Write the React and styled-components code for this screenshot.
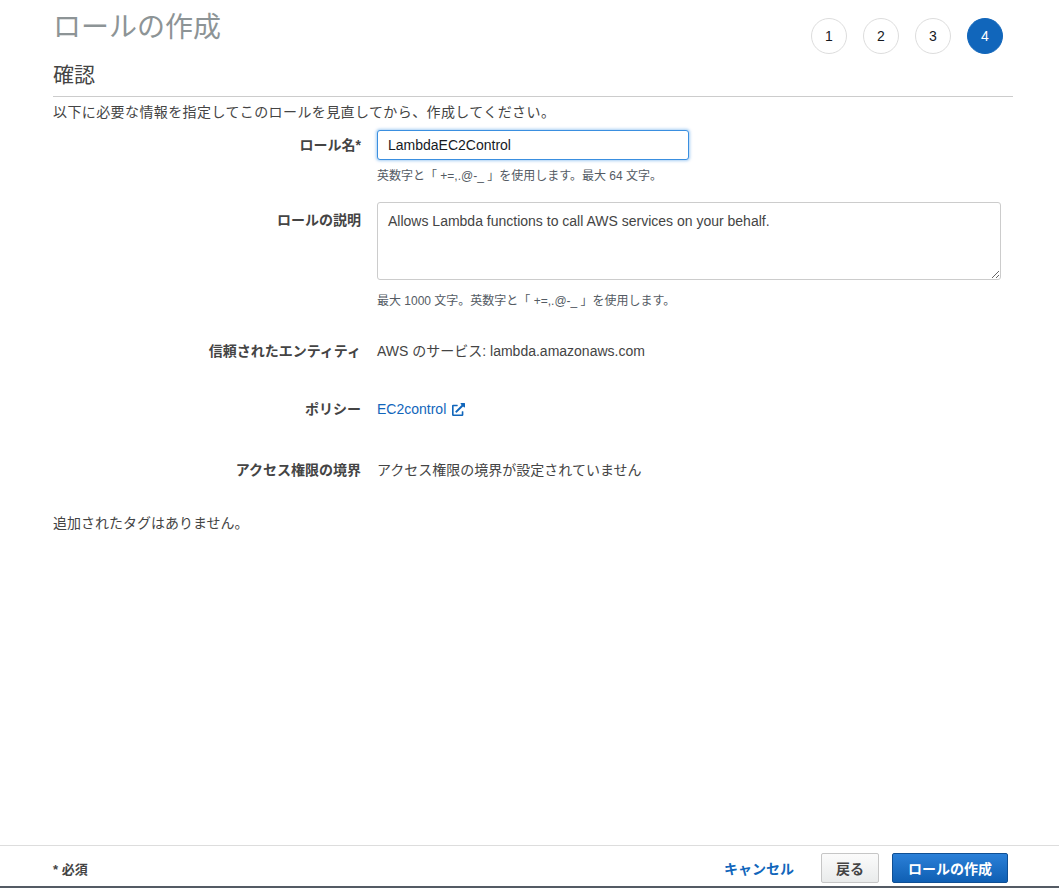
import React from 'react';
import styled, { createGlobalStyle } from 'styled-components';
import { FaExternalLinkAlt } from 'react-icons/fa';

const GlobalStyle = createGlobalStyle`
  html, body {
    margin: 0;
    padding: 0;
    background: #fff;
  }
  body {
    font-family: "Liberation Sans", Arial, "Noto Sans CJK JP", sans-serif;
    color: #444;
  }
  * {
    box-sizing: border-box;
  }
`;

const Page = styled.div`
  min-height: 100vh;
  display: flex;
  flex-direction: column;
`;

const Content = styled.main`
  flex: 1;
  padding: 0 46px 0 53px;
`;

const Header = styled.div`
  display: flex;
  justify-content: space-between;
  align-items: flex-start;
`;

const Title = styled.h1`
  margin: 0;
  padding-top: 13px;
  font-size: 28px;
  line-height: 30px;
  font-weight: normal;
  color: #8d9496;
`;

const Steps = styled.ol`
  display: flex;
  gap: 16px;
  list-style: none;
  margin: 18px 10px 0 0;
  padding: 0;
`;

const Step = styled.li`
  width: 36px;
  height: 36px;
  border-radius: 50%;
  display: flex;
  align-items: center;
  justify-content: center;
  font-size: 14px;
  border: 1px solid ${p => (p.$active ? '#1166bb' : '#ddd')};
  background: ${p => (p.$active ? '#1166bb' : '#fff')};
  color: ${p => (p.$active ? '#fff' : '#16191f')};
`;

const SectionTitle = styled.h2`
  margin: 9px 0 0;
  padding-bottom: 9px;
  font-size: 21px;
  line-height: 24px;
  font-weight: normal;
  color: #444;
  border-bottom: 1px solid #ccc;
`;

const Intro = styled.p`
  margin: 5px 0 0;
  font-size: 14px;
  line-height: 20px;
  letter-spacing: 0.4px;
`;

const FormRow = styled.div`
  display: grid;
  grid-template-columns: 308px 1fr;
  column-gap: 16px;
  margin-top: ${p => p.$gap}px;
  align-items: start;
`;

const Label = styled.div`
  text-align: right;
  font-weight: bold;
  font-size: 14px;
  line-height: 20px;
  color: #444;
  padding-top: ${p => p.$offset || 0}px;
`;

const Field = styled.div`
  display: flex;
  flex-direction: column;
`;

const TextInput = styled.input`
  width: 312px;
  height: 30px;
  padding: 0 10px;
  font: inherit;
  font-size: 14px;
  color: #16191f;
  border: 1px solid #3a8fe0;
  border-radius: 3px;
  box-shadow: 0 0 3px 1px rgba(0, 115, 220, 0.35);
  outline: none;
`;

const TextArea = styled.textarea`
  width: 624px;
  height: 78px;
  padding: 8px 10px;
  font: inherit;
  font-size: 14px;
  line-height: 20px;
  color: #444;
  border: 1px solid #ccc;
  border-radius: 3px;
  resize: vertical;
  outline: none;
`;

const Hint = styled.div`
  margin-top: ${p => p.$gap}px;
  font-size: 12px;
  line-height: 16px;
  color: #545b64;
`;

const Value = styled.div`
  font-size: 14px;
  line-height: 20px;
  color: #444;
`;

const Link = styled.a`
  display: inline-flex;
  align-items: center;
  gap: 6px;
  font-size: 14px;
  line-height: 20px;
  color: #1166bb;
  text-decoration: none;
  cursor: pointer;
`;

const Note = styled.p`
  margin: 33px 0 0;
  font-size: 14px;
  line-height: 20px;
`;

const Footer = styled.footer`
  display: flex;
  align-items: center;
  padding: 7px 51px 3px 53px;
  border-top: 1px solid #ddd;
  border-bottom: 2px solid #545b64;
`;

const Required = styled.span`
  font-size: 13px;
  font-weight: bold;
  color: #444;
`;

const Actions = styled.div`
  margin-left: auto;
  display: flex;
  align-items: center;
`;

const CancelLink = styled.a`
  font-size: 14px;
  font-weight: bold;
  color: #1166bb;
  margin-right: 27px;
  cursor: pointer;
`;

const Button = styled.button`
  height: 30px;
  padding: 0 ${p => (p.$primary ? '15px' : '14px')};
  font: inherit;
  font-size: 14px;
  font-weight: bold;
  border-radius: 2px;
  cursor: pointer;
  margin-left: ${p => (p.$primary ? '13px' : '0')};
  border: 1px solid ${p => (p.$primary ? '#0f4f94' : '#c6c6c6')};
  color: ${p => (p.$primary ? '#fff' : '#444')};
  background: ${p =>
    p.$primary
      ? 'linear-gradient(to bottom, #2b80d8, #0f5fb3)'
      : 'linear-gradient(to bottom, #fbfbfb, #e9ebeb)'};
`;

export default function App() {
  return (
    <Page>
      <GlobalStyle />
      <Content>
        <Header>
          <Title>ロールの作成</Title>
          <Steps>
            {[1, 2, 3, 4].map(n => (
              <Step key={n} $active={n === 4}>
                {n}
              </Step>
            ))}
          </Steps>
        </Header>

        <SectionTitle>確認</SectionTitle>
        <Intro>以下に必要な情報を指定してこのロールを見直してから、作成してください。</Intro>

        <FormRow $gap={8}>
          <Label $offset={5}>ロール名*</Label>
          <Field>
            <TextInput readOnly value="LambdaEC2Control" />
            <Hint $gap={8}>英数字と「 +=,.@-_ 」を使用します。最大 64 文字。</Hint>
          </Field>
        </FormRow>

        <FormRow $gap={18}>
          <Label $offset={8}>ロールの説明</Label>
          <Field>
            <TextArea
              readOnly
              value="Allows Lambda functions to call AWS services on your behalf."
            />
            <Hint $gap={13}>最大 1000 文字。英数字と「 +=,.@-_ 」を使用します。</Hint>
          </Field>
        </FormRow>

        <FormRow $gap={32}>
          <Label>信頼されたエンティティ</Label>
          <Value>AWS のサービス: lambda.amazonaws.com</Value>
        </FormRow>

        <FormRow $gap={38}>
          <Label>ポリシー</Label>
          <Value>
            <Link>
              EC2control <FaExternalLinkAlt size={13} />
            </Link>
          </Value>
        </FormRow>

        <FormRow $gap={41}>
          <Label>アクセス権限の境界</Label>
          <Value>アクセス権限の境界が設定されていません</Value>
        </FormRow>

        <Note>追加されたタグはありません。</Note>
      </Content>

      <Footer>
        <Required>* 必須</Required>
        <Actions>
          <CancelLink>キャンセル</CancelLink>
          <Button>戻る</Button>
          <Button $primary>ロールの作成</Button>
        </Actions>
      </Footer>
    </Page>
  );
}
